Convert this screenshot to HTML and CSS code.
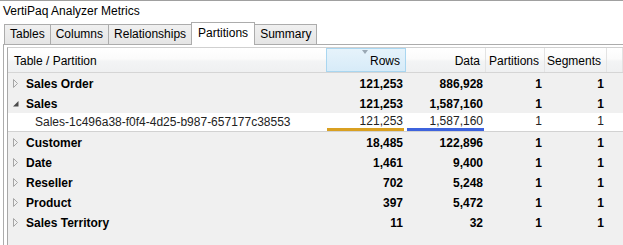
FILE: index.html
```html
<!DOCTYPE html>
<html lang="en">
<head>
    <meta charset="UTF-8">
    <title>VertiPaq Analyzer Metrics</title>
    <link rel="stylesheet" href="styles.css">
</head>
<body>
    <div class="window">
        <div class="title">VertiPaq Analyzer Metrics</div>
        <div class="tabs">
            <div class="tab">Tables</div>
            <div class="tab">Columns</div>
            <div class="tab">Relationships</div>
            <div class="tab active">Partitions</div>
            <div class="tab">Summary</div>
        </div>
        <div class="panel">
            <div class="grid">
                <div class="row head">
                    <div class="cell name">Table / Partition</div>
                    <div class="cell num sorted">Rows</div>
                    <div class="cell num">Data</div>
                    <div class="cell num">Partitions</div>
                    <div class="cell num">Segments</div>
                    <div class="cell"></div>
                </div>

                <div class="row table">
                    <div class="cell name"><svg class="exp" width="6" height="9"><path d="M0.5 0.5 L4.5 4.5 L0.5 8.5 Z" fill="none" stroke="#a6a6a6"/></svg>Sales Order</div>
                    <div class="cell num">121,253</div>
                    <div class="cell num">886,928</div>
                    <div class="cell num">1</div>
                    <div class="cell num">1</div>
                </div>
                <div class="row table">
                    <div class="cell name"><svg class="exp" width="6" height="9"><path d="M5.5 2 L5.5 7.5 L0 7.5 Z" fill="#4a4a4a"/></svg>Sales</div>
                    <div class="cell num">121,253</div>
                    <div class="cell num">1,587,160</div>
                    <div class="cell num">1</div>
                    <div class="cell num">1</div>
                </div>
                <div class="row part">
                    <div class="cell name">Sales-1c496a38-f0f4-4d25-b987-657177c38553</div>
                    <div class="cell num"><span>121,253</span><div class="bar rows-bar"></div></div>
                    <div class="cell num"><span>1,587,160</span><div class="bar data-bar"></div></div>
                    <div class="cell num"><span>1</span></div>
                    <div class="cell num"><span>1</span></div>
                </div>
                <div class="row table">
                    <div class="cell name"><svg class="exp" width="6" height="9"><path d="M0.5 0.5 L4.5 4.5 L0.5 8.5 Z" fill="none" stroke="#a6a6a6"/></svg>Customer</div>
                    <div class="cell num">18,485</div>
                    <div class="cell num">122,896</div>
                    <div class="cell num">1</div>
                    <div class="cell num">1</div>
                </div>
                <div class="row table">
                    <div class="cell name"><svg class="exp" width="6" height="9"><path d="M0.5 0.5 L4.5 4.5 L0.5 8.5 Z" fill="none" stroke="#a6a6a6"/></svg>Date</div>
                    <div class="cell num">1,461</div>
                    <div class="cell num">9,400</div>
                    <div class="cell num">1</div>
                    <div class="cell num">1</div>
                </div>
                <div class="row table">
                    <div class="cell name"><svg class="exp" width="6" height="9"><path d="M0.5 0.5 L4.5 4.5 L0.5 8.5 Z" fill="none" stroke="#a6a6a6"/></svg>Reseller</div>
                    <div class="cell num">702</div>
                    <div class="cell num">5,248</div>
                    <div class="cell num">1</div>
                    <div class="cell num">1</div>
                </div>
                <div class="row table">
                    <div class="cell name"><svg class="exp" width="6" height="9"><path d="M0.5 0.5 L4.5 4.5 L0.5 8.5 Z" fill="none" stroke="#a6a6a6"/></svg>Product</div>
                    <div class="cell num">397</div>
                    <div class="cell num">5,472</div>
                    <div class="cell num">1</div>
                    <div class="cell num">1</div>
                </div>
                <div class="row table">
                    <div class="cell name"><svg class="exp" width="6" height="9"><path d="M0.5 0.5 L4.5 4.5 L0.5 8.5 Z" fill="none" stroke="#a6a6a6"/></svg>Sales Territory</div>
                    <div class="cell num">11</div>
                    <div class="cell num">32</div>
                    <div class="cell num">1</div>
                    <div class="cell num">1</div>
                </div>
            </div>
        </div>
    </div>
</body>
</html>
```

FILE: styles.css
```css
body {
    margin: 0;
    font-family: "Liberation Sans", Arial, sans-serif;
    font-size: 12px;
    color: #000;
    background: #fff;
}
.window {
    width: 623px;
    height: 245px;
    overflow: hidden;
    border-top: 1px solid #a0a0a0;
    box-sizing: border-box;
}
.title {
    height: 20px;
    line-height: 20px;
    padding-left: 3px;
}
.tabs {
    display: flex;
    align-items: flex-end;
    height: 23px;
    padding-left: 4px;
}
.tab {
    height: 19px;
    line-height: 19px;
    padding: 0 5px;
    margin-right: -1px;
    border: 1px solid #acacac;
    border-bottom: none;
    background: linear-gradient(#f0f0f0, #e5e5e5);
}
.tab.active {
    position: relative;
    z-index: 1;
    height: 22px;
    margin-bottom: -1px;
    padding: 0 6px;
    line-height: 20px;
    background: #fff;
}
.panel {
    margin-left: 3px;
    padding: 2px 0 0 3px;
    border-top: 1px solid #acacac;
    border-left: 1px solid #acacac;
    background: #fff;
}
.grid {
    height: 200px;
    border-top: 1px solid #d0d0d0;
    border-left: 1px solid #a8a8a8;
    background: #f0f0f0;
}
.row {
    display: grid;
    grid-template-columns: 318px 80px 80px 59px 62px 1fr;
    height: 20px;
}
.cell {
    display: flex;
    align-items: center;
    white-space: nowrap;
    padding-top: 1px;
}
.num {
    justify-content: flex-end;
    padding-right: 3px;
}
.head {
    height: 24px;
    border-bottom: 1px solid #d5d5d5;
    background: linear-gradient(#ffffff 0, #fbfbfb 45%, #f3f4f5 55%, #eff0f1 100%);
}
.head .cell {
    border-right: 1px solid #e3e3e3;
}
.head .num {
    padding-right: 5px;
}
.head .name {
    padding-left: 6px;
    border-right: none;
}
.head .sorted {
    position: relative;
    border: 1px solid #a9d6f0;
    background: linear-gradient(#e6f3fb, #d7ebf8);
}
.head .sorted::before {
    content: "";
    position: absolute;
    top: 1px;
    left: 35px;
    border-left: 3px solid transparent;
    border-right: 3px solid transparent;
    border-top: 4px solid #9aa8b4;
}
.table {
    font-weight: bold;
}
.table .name {
    padding-left: 5px;
}
.exp {
    margin-right: 7px;
}
.part {
    height: 18px;
    border-bottom: 1px solid #d2d2d2;
    background: #fff;
    color: #222;
}
.part .cell {
    padding-top: 0;
}
.part .name {
    padding-left: 27px;
}
.part .num {
    flex-direction: column;
    align-items: flex-end;
    justify-content: flex-start;
}
.part .num span {
    height: 15px;
    line-height: 17px;
}
.bar {
    align-self: stretch;
    height: 3px;
    margin: 0 -1px 0 1px;
}
.rows-bar {
    background: #d9a021;
}
.data-bar {
    background: #3e63dd;
}
```
